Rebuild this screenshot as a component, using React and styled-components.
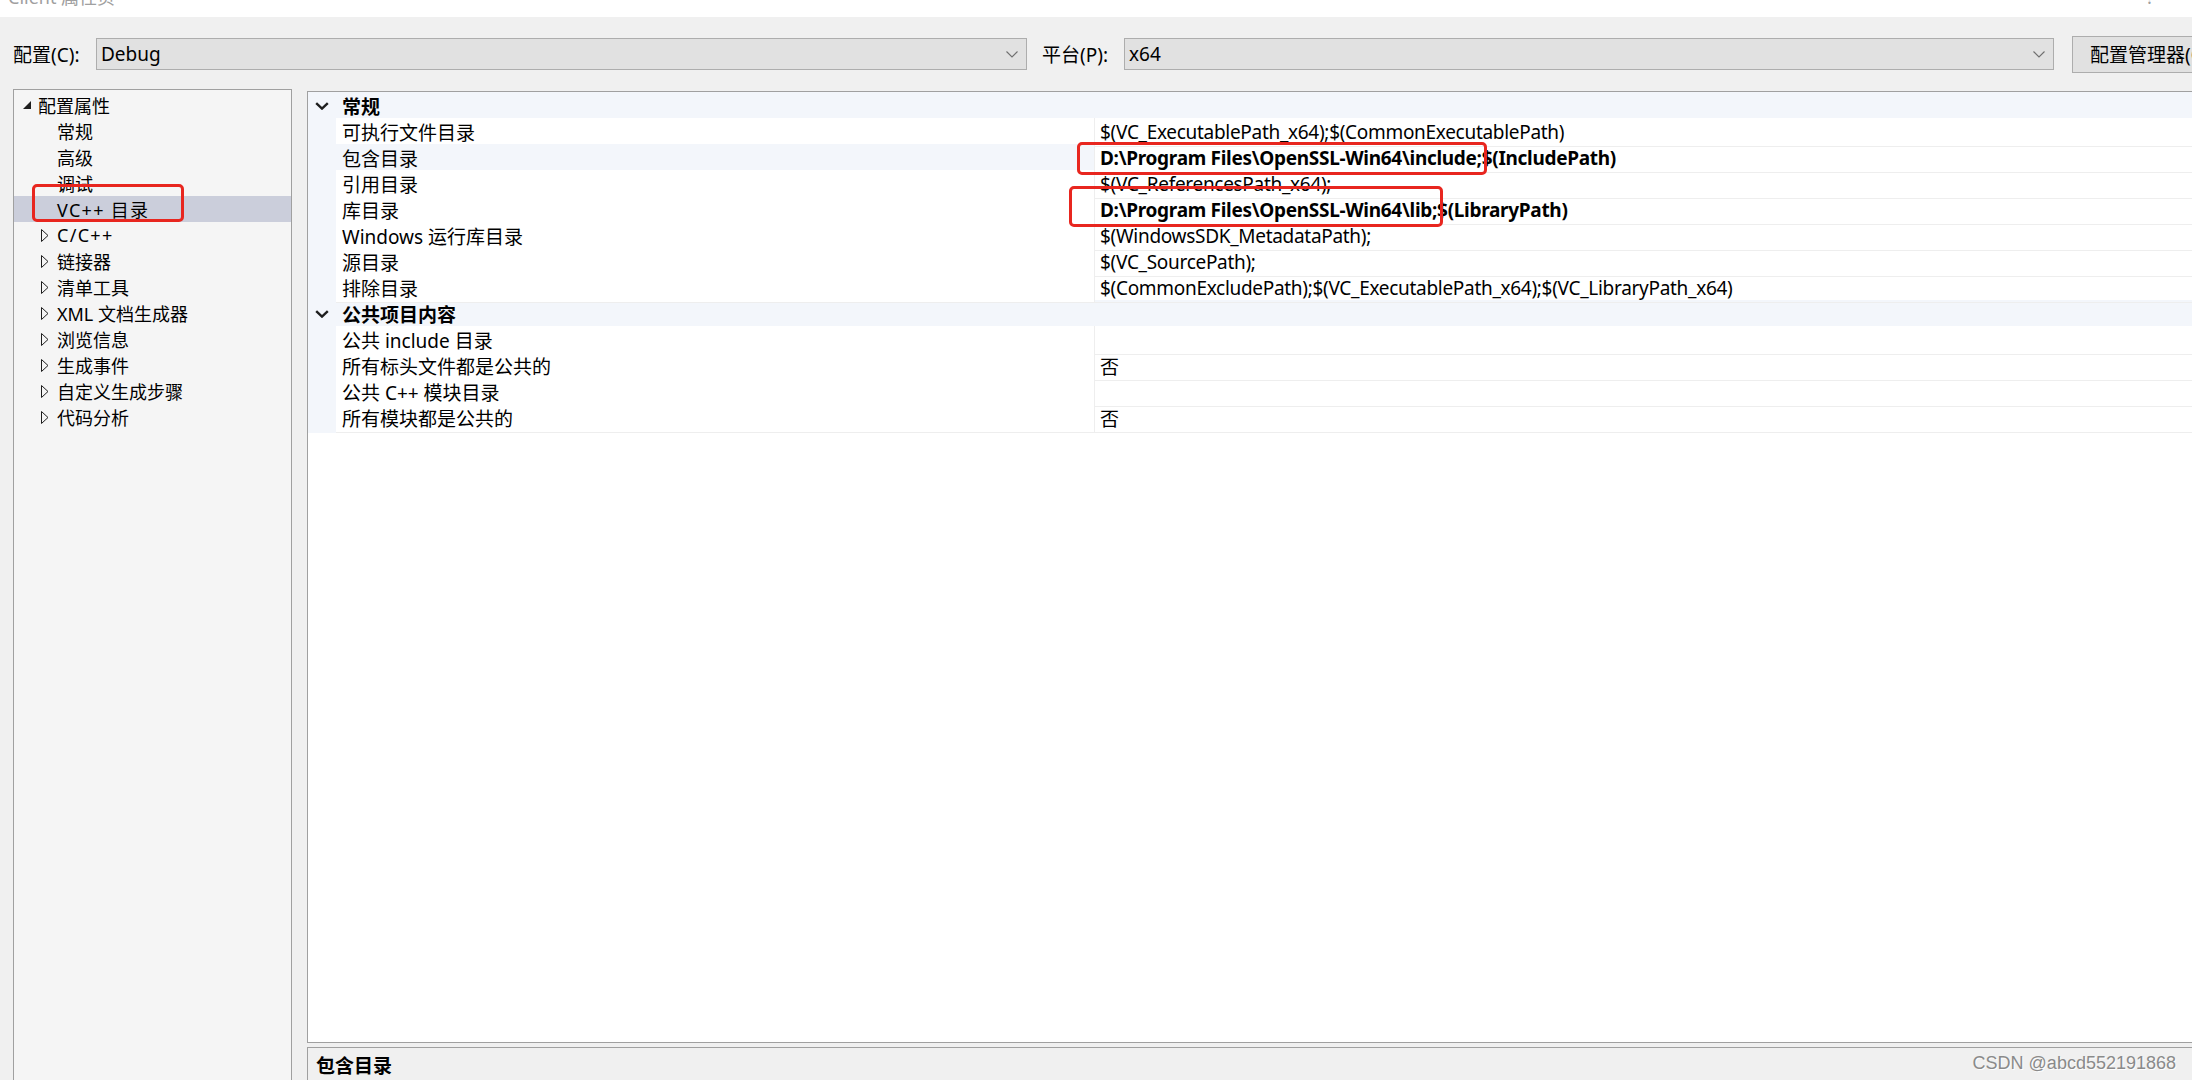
import React from 'react';
import styled, { createGlobalStyle } from 'styled-components';

const Global = createGlobalStyle`
  html, body { margin: 0; padding: 0; background: #f0f0f0; }
  body { font-family: "Noto Sans", "Noto Sans CJK SC", sans-serif; color: #000; }
`;

const Page = styled.div`
  position: relative;
  width: 2192px;
  height: 1080px;
  overflow: hidden;
  display: flex;
  flex-direction: column;
  background: #f0f0f0;
`;

const TitleBar = styled.div`
  height: 17px;
  flex: none;
  background: #fff;
  overflow: hidden;
  display: flex;
  justify-content: space-between;
  align-items: flex-start;
  padding: 0 38px 0 8px;
  color: #a0a0a0;
  font-size: 18px;
`;

const TitleText = styled.span`
  line-height: 18px;
  margin-top: -12px;
  white-space: nowrap;
`;

const Toolbar = styled.div`
  height: 72px;
  flex: none;
  box-sizing: border-box;
  padding: 2px 0 0 13px;
  display: flex;
  align-items: center;
  font-size: 19px;
`;

const FieldLabel = styled.label`
  width: ${(p) => p.$w}px;
  margin-left: ${(p) => p.$gap || 0}px;
  flex: none;
  white-space: nowrap;
`;

const Combo = styled.div`
  width: ${(p) => p.$w}px;
  height: 32px;
  flex: none;
  box-sizing: border-box;
  background: #e1e1e1;
  border: 1px solid #adadad;
  display: flex;
  align-items: center;
  justify-content: space-between;
  padding: 0 8px 0 4px;
`;

const Button = styled.div`
  margin-left: 18px;
  height: 37px;
  flex: none;
  box-sizing: border-box;
  background: #e1e1e1;
  border: 1px solid #adadad;
  display: flex;
  align-items: center;
  padding: 0 20px 0 17px;
  white-space: nowrap;
`;

const Body = styled.div`
  flex: 1;
  min-height: 0;
  display: flex;
  padding-left: 13px;
`;

const Tree = styled.div`
  width: 279px;
  flex: none;
  box-sizing: border-box;
  border: 1px solid #a0a0a0;
  border-bottom: none;
  background: #f5f5f5;
  padding-top: 2px;
  font-size: 18px;
`;

const TreeRow = styled.div`
  position: relative;
  height: 26px;
  display: flex;
  align-items: center;
  padding-left: ${(p) => 8 + p.$level * 19}px;
  background: ${(p) => (p.$selected ? '#cbcedb' : 'transparent')};
  white-space: nowrap;
`;

const TreeText = styled.span`
  letter-spacing: ${(p) => (p.$latin ? '1.3px' : '0')};
`;

const Expander = styled.span`
  width: 16px;
  flex: none;
  display: flex;
  align-items: center;
`;

const RightCol = styled.div`
  width: 1900px;
  flex: none;
  margin-left: 15px;
  padding-top: 2px;
  display: flex;
  flex-direction: column;
  gap: 4px;
`;

const Grid = styled.div`
  height: 952px;
  flex: none;
  box-sizing: border-box;
  border: 1px solid #a0a0a0;
  border-right: none;
  background: #fff;
`;

const Row = styled.div`
  display: grid;
  grid-template-columns: 28px 759px 1fr;
  height: 26px;
  font-size: 19px;
  background: ${(p) => (p.$category ? '#f3f6fb' : '#fff')};
`;

const Gutter = styled.div`
  background: #f3f6fb;
  display: flex;
  align-items: center;
  justify-content: center;
`;

const CategoryName = styled.div`
  grid-column: 2 / 4;
  display: flex;
  align-items: center;
  padding-left: 6px;
  font-weight: 700;
`;

const NameCell = styled.div`
  box-sizing: border-box;
  display: flex;
  align-items: center;
  padding-left: 6px;
  border-bottom: 1px solid #eeeeee;
  border-right: 1px solid #eeeeee;
  background: ${(p) => (p.$selected ? '#f3f6fb' : '#fff')};
  white-space: nowrap;
`;

const ValueCell = styled.div`
  position: relative;
  box-sizing: border-box;
  display: flex;
  align-items: center;
  padding-left: 5px;
  border-bottom: 1px solid #eeeeee;
  font-weight: ${(p) => (p.$bold ? 700 : 400)};
  letter-spacing: -0.3px;
  white-space: nowrap;
`;

const Annot = styled.div`
  position: absolute;
  left: ${(p) => p.$l}px;
  top: ${(p) => p.$t}px;
  width: ${(p) => p.$w}px;
  height: ${(p) => p.$h}px;
  box-sizing: border-box;
  border: 3px solid #e8261f;
  border-radius: 5px;
  pointer-events: none;
`;

const Description = styled.div`
  flex: 1;
  box-sizing: border-box;
  border-top: 1px solid #a0a0a0;
  border-left: 1px solid #a0a0a0;
  background: #f0f0f0;
  padding: 5px 8px 0;
  font-size: 19px;
  line-height: 26px;
  font-weight: 700;
`;

const Watermark = styled.div`
  position: absolute;
  right: 16px;
  bottom: 7px;
  font-family: "Liberation Sans", Arial, sans-serif;
  font-size: 18px;
  line-height: 20px;
  color: #8a8a8a;
  text-shadow: 1px 1px 0 rgba(255, 255, 255, 0.9);
`;

const ComboChevron = () => (
  <svg width="12" height="7" viewBox="0 0 12 7">
    <polyline points="0.5,0.5 6,6 11.5,0.5" fill="none" stroke="#6f6f6f" strokeWidth="1.1" />
  </svg>
);

const CategoryChevron = () => (
  <svg width="14" height="8" viewBox="0 0 14 8">
    <polyline points="1.2,1.2 7,6.6 12.8,1.2" fill="none" stroke="#1e1e1e" strokeWidth="2.4" />
  </svg>
);

const OpenTriangle = () => (
  <svg width="10" height="10" viewBox="0 0 10 10">
    <polygon points="9,1 9,9 1,9" fill="#1e1e1e" />
  </svg>
);

const ClosedTriangle = () => (
  <svg width="8" height="13" viewBox="0 0 8 13">
    <polygon points="0.5,0.5 7,6.5 0.5,12.5" fill="none" stroke="#1e1e1e" strokeWidth="1" />
  </svg>
);

const treeItems = [
  { level: 0, exp: 'open', text: '配置属性' },
  { level: 1, text: '常规' },
  { level: 1, text: '高级' },
  { level: 1, text: '调试' },
  { level: 1, text: 'VC++ 目录', latin: true, selected: true, annot: { l: 18, t: -12, w: 152, h: 38 } },
  { level: 1, exp: 'closed', text: 'C/C++', latin: true },
  { level: 1, exp: 'closed', text: '链接器' },
  { level: 1, exp: 'closed', text: '清单工具' },
  { level: 1, exp: 'closed', text: 'XML 文档生成器' },
  { level: 1, exp: 'closed', text: '浏览信息' },
  { level: 1, exp: 'closed', text: '生成事件' },
  { level: 1, exp: 'closed', text: '自定义生成步骤' },
  { level: 1, exp: 'closed', text: '代码分析' },
];

const gridData = [
  {
    category: '常规',
    rows: [
      { name: '可执行文件目录', value: '$(VC_ExecutablePath_x64);$(CommonExecutablePath)' },
      {
        name: '包含目录',
        value: 'D:\\Program Files\\OpenSSL-Win64\\include;$(IncludePath)',
        bold: true,
        selected: true,
        annot: { l: -18, t: -2, w: 410, h: 33 },
      },
      { name: '引用目录', value: '$(VC_ReferencesPath_x64);' },
      {
        name: '库目录',
        value: 'D:\\Program Files\\OpenSSL-Win64\\lib;$(LibraryPath)',
        bold: true,
        annot: { l: -26, t: -10, w: 374, h: 41 },
      },
      { name: 'Windows 运行库目录', value: '$(WindowsSDK_MetadataPath);' },
      { name: '源目录', value: '$(VC_SourcePath);' },
      { name: '排除目录', value: '$(CommonExcludePath);$(VC_ExecutablePath_x64);$(VC_LibraryPath_x64)' },
    ],
  },
  {
    category: '公共项目内容',
    rows: [
      { name: '公共 include 目录', value: '' },
      { name: '所有标头文件都是公共的', value: '否' },
      { name: '公共 C++ 模块目录', value: '' },
      { name: '所有模块都是公共的', value: '否' },
    ],
  },
];

export default function App() {
  return (
    <Page>
      <Global />
      <TitleBar>
        <TitleText>Client 属性页</TitleText>
        <TitleText>?</TitleText>
      </TitleBar>
      <Toolbar>
        <FieldLabel $w={83}>配置(C):</FieldLabel>
        <Combo $w={931}>
          <span>Debug</span>
          <ComboChevron />
        </Combo>
        <FieldLabel $w={82} $gap={15}>平台(P):</FieldLabel>
        <Combo $w={930}>
          <span>x64</span>
          <ComboChevron />
        </Combo>
        <Button>配置管理器(O)...</Button>
      </Toolbar>
      <Body>
        <Tree>
          {treeItems.map((it, i) => (
            <TreeRow key={i} $level={it.level} $selected={it.selected}>
              <Expander>
                {it.exp === 'open' && <OpenTriangle />}
                {it.exp === 'closed' && <ClosedTriangle />}
              </Expander>
              <TreeText $latin={it.latin}>{it.text}</TreeText>
              {it.annot && <Annot $l={it.annot.l} $t={it.annot.t} $w={it.annot.w} $h={it.annot.h} />}
            </TreeRow>
          ))}
        </Tree>
        <RightCol>
          <Grid>
            {gridData.map((cat) => (
              <React.Fragment key={cat.category}>
                <Row $category>
                  <Gutter>
                    <CategoryChevron />
                  </Gutter>
                  <CategoryName>{cat.category}</CategoryName>
                </Row>
                {cat.rows.map((r) => (
                  <Row key={r.name}>
                    <Gutter />
                    <NameCell $selected={r.selected}>{r.name}</NameCell>
                    <ValueCell $bold={r.bold}>
                      {r.value}
                      {r.annot && <Annot $l={r.annot.l} $t={r.annot.t} $w={r.annot.w} $h={r.annot.h} />}
                    </ValueCell>
                  </Row>
                ))}
              </React.Fragment>
            ))}
          </Grid>
          <Description>包含目录</Description>
        </RightCol>
      </Body>
      <Watermark>CSDN @abcd552191868</Watermark>
    </Page>
  );
}
